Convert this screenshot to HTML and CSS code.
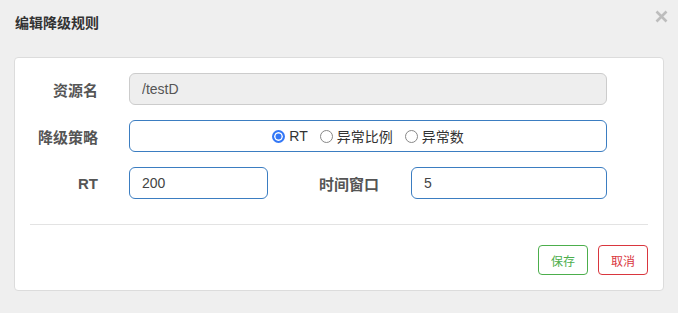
FILE: index.html
```html
<!DOCTYPE html>
<html lang="zh">

<head>
  <meta charset="UTF-8">
  <meta name="viewport" content="width=device-width, initial-scale=1.0">
  <title>编辑降级规则</title>
  <link rel="stylesheet" href="styles.css">
</head>

<body>
  <div class="modal">

    <!-- Header -->
    <div class="modal-header">
      <h4 class="modal-title">编辑降级规则</h4>
      <span class="close">
        <svg width="13" height="13" viewBox="0 0 13 13">
          <path d="M1.5 1.5 L11.5 11.5 M11.5 1.5 L1.5 11.5" stroke="#bdbdbd" stroke-width="2.6" fill="none" />
        </svg>
      </span>
    </div>

    <!-- Form -->
    <div class="card">
      <div class="form-row">
        <label class="form-label">资源名</label>
        <input type="text" class="form-input wide readonly" value="/testD" readonly>
      </div>

      <div class="form-row">
        <label class="form-label">降级策略</label>
        <div class="form-input wide radio-box">
          <span class="radio checked"></span><span class="radio-text">RT</span>
          <span class="radio"></span><span class="radio-text">异常比例</span>
          <span class="radio"></span><span class="radio-text">异常数</span>
        </div>
      </div>

      <div class="form-row">
        <label class="form-label">RT</label>
        <input type="text" class="form-input short" value="200">
        <label class="form-label second">时间窗口</label>
        <input type="text" class="form-input medium" value="5">
      </div>

      <hr class="divider">

      <div class="actions">
        <button class="btn btn-save">保存</button>
        <button class="btn btn-cancel">取消</button>
      </div>
    </div>
  </div>
</body>

</html>
```

FILE: styles.css
```css
body {
  margin: 0;
  background-color: #efefef;
  font-family: "Liberation Sans", "Noto Sans CJK SC", sans-serif;
  color: #333;
}

.modal {
  width: 678px;
  height: 313px;
}

.modal-header {
  height: 57px;
  box-sizing: border-box;
  padding: 10px 10px 0 15px;
  display: flex;
  justify-content: space-between;
  align-items: flex-start;
}

.modal-title {
  margin: 3px 0 0;
  font-size: 14px;
  line-height: 20px;
  font-weight: bold;
  color: #333;
}

.close svg {
  display: block;
}

.card {
  margin: 0 14px;
  height: 234px;
  box-sizing: border-box;
  background-color: #fff;
  border: 1px solid #dcdcdc;
  border-radius: 4px;
  padding: 15px 15px 0;
}

.form-row {
  display: flex;
  align-items: center;
  margin-bottom: 15px;
}

.form-label {
  width: 68px;
  margin-right: 31px;
  text-align: right;
  font-size: 15px;
  font-weight: bold;
  color: #555;
}

.form-label.second {
  width: 111px;
  margin-right: 32px;
}

.form-input {
  box-sizing: border-box;
  height: 32px;
  padding: 0 12px;
  border: 1px solid #3b7dc1;
  border-radius: 6px;
  background-color: #fff;
  font-family: "Liberation Sans", "Noto Sans CJK SC", sans-serif;
  font-size: 14px;
  color: #444;
  outline: none;
}

.form-input.wide {
  width: 478px;
}

.form-input.short {
  width: 139px;
}

.form-input.medium {
  width: 196px;
}

.form-input.readonly {
  background-color: #eee;
  border-color: #ccc;
  color: #555;
}

.radio-box {
  display: flex;
  align-items: center;
  justify-content: center;
  font-size: 14px;
  color: #333;
}

.radio {
  width: 13px;
  height: 13px;
  box-sizing: border-box;
  border: 1px solid #888;
  border-radius: 50%;
  background-color: #fff;
  margin-right: 4px;
}

.radio.checked {
  border: 2px solid #3478f6;
  background-color: #3478f6;
  box-shadow: inset 0 0 0 1.5px #fff;
}

.radio-text {
  margin-right: 12px;
}

.radio-text:last-child {
  margin-right: 0;
}

.divider {
  margin: 25px 0 20px;
  border: none;
  border-top: 1px solid #e3e3e3;
}

.actions {
  display: flex;
  justify-content: flex-end;
  gap: 10px;
}

.btn {
  width: 50px;
  height: 30px;
  border-radius: 4px;
  background-color: #fff;
  font-family: "Liberation Sans", "Noto Sans CJK SC", sans-serif;
  font-size: 12px;
  cursor: pointer;
}

.btn-save {
  border: 1px solid #4cae4c;
  color: #4cae4c;
}

.btn-cancel {
  border: 1px solid #d9363e;
  color: #d9363e;
}
```
